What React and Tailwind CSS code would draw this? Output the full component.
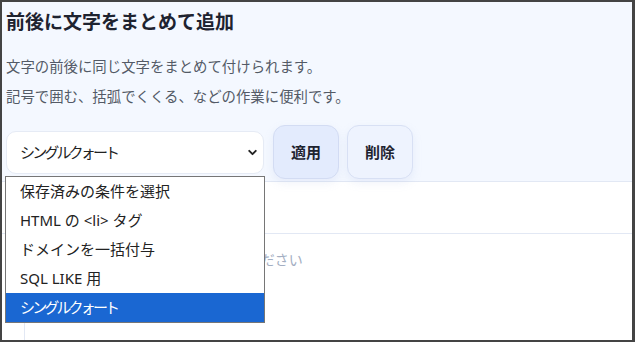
import { ChevronDown } from "lucide-react";

const options = [
  "保存済みの条件を選択",
  "HTML の <li> タグ",
  "ドメインを一括付与",
  "SQL LIKE 用",
  "シングルクォート",
];

export default function App() {
  return (
    <div className="relative w-[635px] h-[342px] overflow-hidden border-2 border-r-[3px] border-[#444] bg-white font-['Noto_Sans','Noto_Sans_CJK_JP',sans-serif]">
      {/* header */}
      <div className="h-[180px] bg-[#f4f8ff] border-b border-[#e2e8f4] pl-1 pt-[6px]">
        <h2 className="text-[19px] leading-[28px] font-bold text-[#1e2330]">
          前後に文字をまとめて追加
        </h2>
        <p className="mt-4 text-[14.4px] leading-[30px] text-[#535a66]">
          文字の前後に同じ文字をまとめて付けられます。
        </p>
        <p className="text-[14.4px] leading-[30px] text-[#535a66]">
          記号で囲む、括弧でくくる、などの作業に便利です。
        </p>
        <div className="mt-[13px] flex items-center">
          <div className="flex h-[43px] w-[258px] items-center justify-between rounded-[10px] border border-[#e6ebf5] bg-white pl-[13px] pr-[4px] text-[15px] text-[#222]">
            <span className="tracking-[-0.19em]">シングルクォート</span>
            <ChevronDown size={13} strokeWidth={3.5} className="text-[#222]" />
          </div>
          <button className="ml-[9px] h-[54px] w-[66px] rounded-xl border border-[#d3dcf3] bg-[#e3ebfd] text-[15px] font-bold text-[#1e2330] shadow-[0_4px_10px_rgba(150,170,220,0.15)]">
            適用
          </button>
          <button className="ml-[8px] h-[54px] w-[66px] rounded-xl border border-[#d8e0f4] bg-[#eef3fe] text-[15px] font-bold text-[#1e2330] shadow-[0_4px_10px_rgba(150,170,220,0.15)]">
            削除
          </button>
        </div>
      </div>

      {/* toolbar row */}
      <div className="h-[52px] border-b border-[#e2e8f4]"></div>

      {/* editor */}
      <div className="flex h-[110px]">
        <div className="w-[23px] border-r border-[#e2e8f4]"></div>
        <div className="pl-[27px] pt-4 text-sm leading-5 text-[#a3aec2]">
          変換したいテキストを入力してください
        </div>
      </div>

      {/* native select popup */}
      <ul className="absolute left-[3px] top-[174px] w-[260px] border border-[#767676] bg-white text-[15px] text-[#222]">
        {options.map((o, i) => (
          <li
            key={o}
            className={
              i === 4
                ? "h-[29px] pl-[14px] leading-[29px] tracking-[-0.19em] bg-[#1a67d2] text-white"
                : "h-[29px] pl-[14px] leading-[29px]"
            }
          >
            {o}
          </li>
        ))}
      </ul>
    </div>
  );
}
